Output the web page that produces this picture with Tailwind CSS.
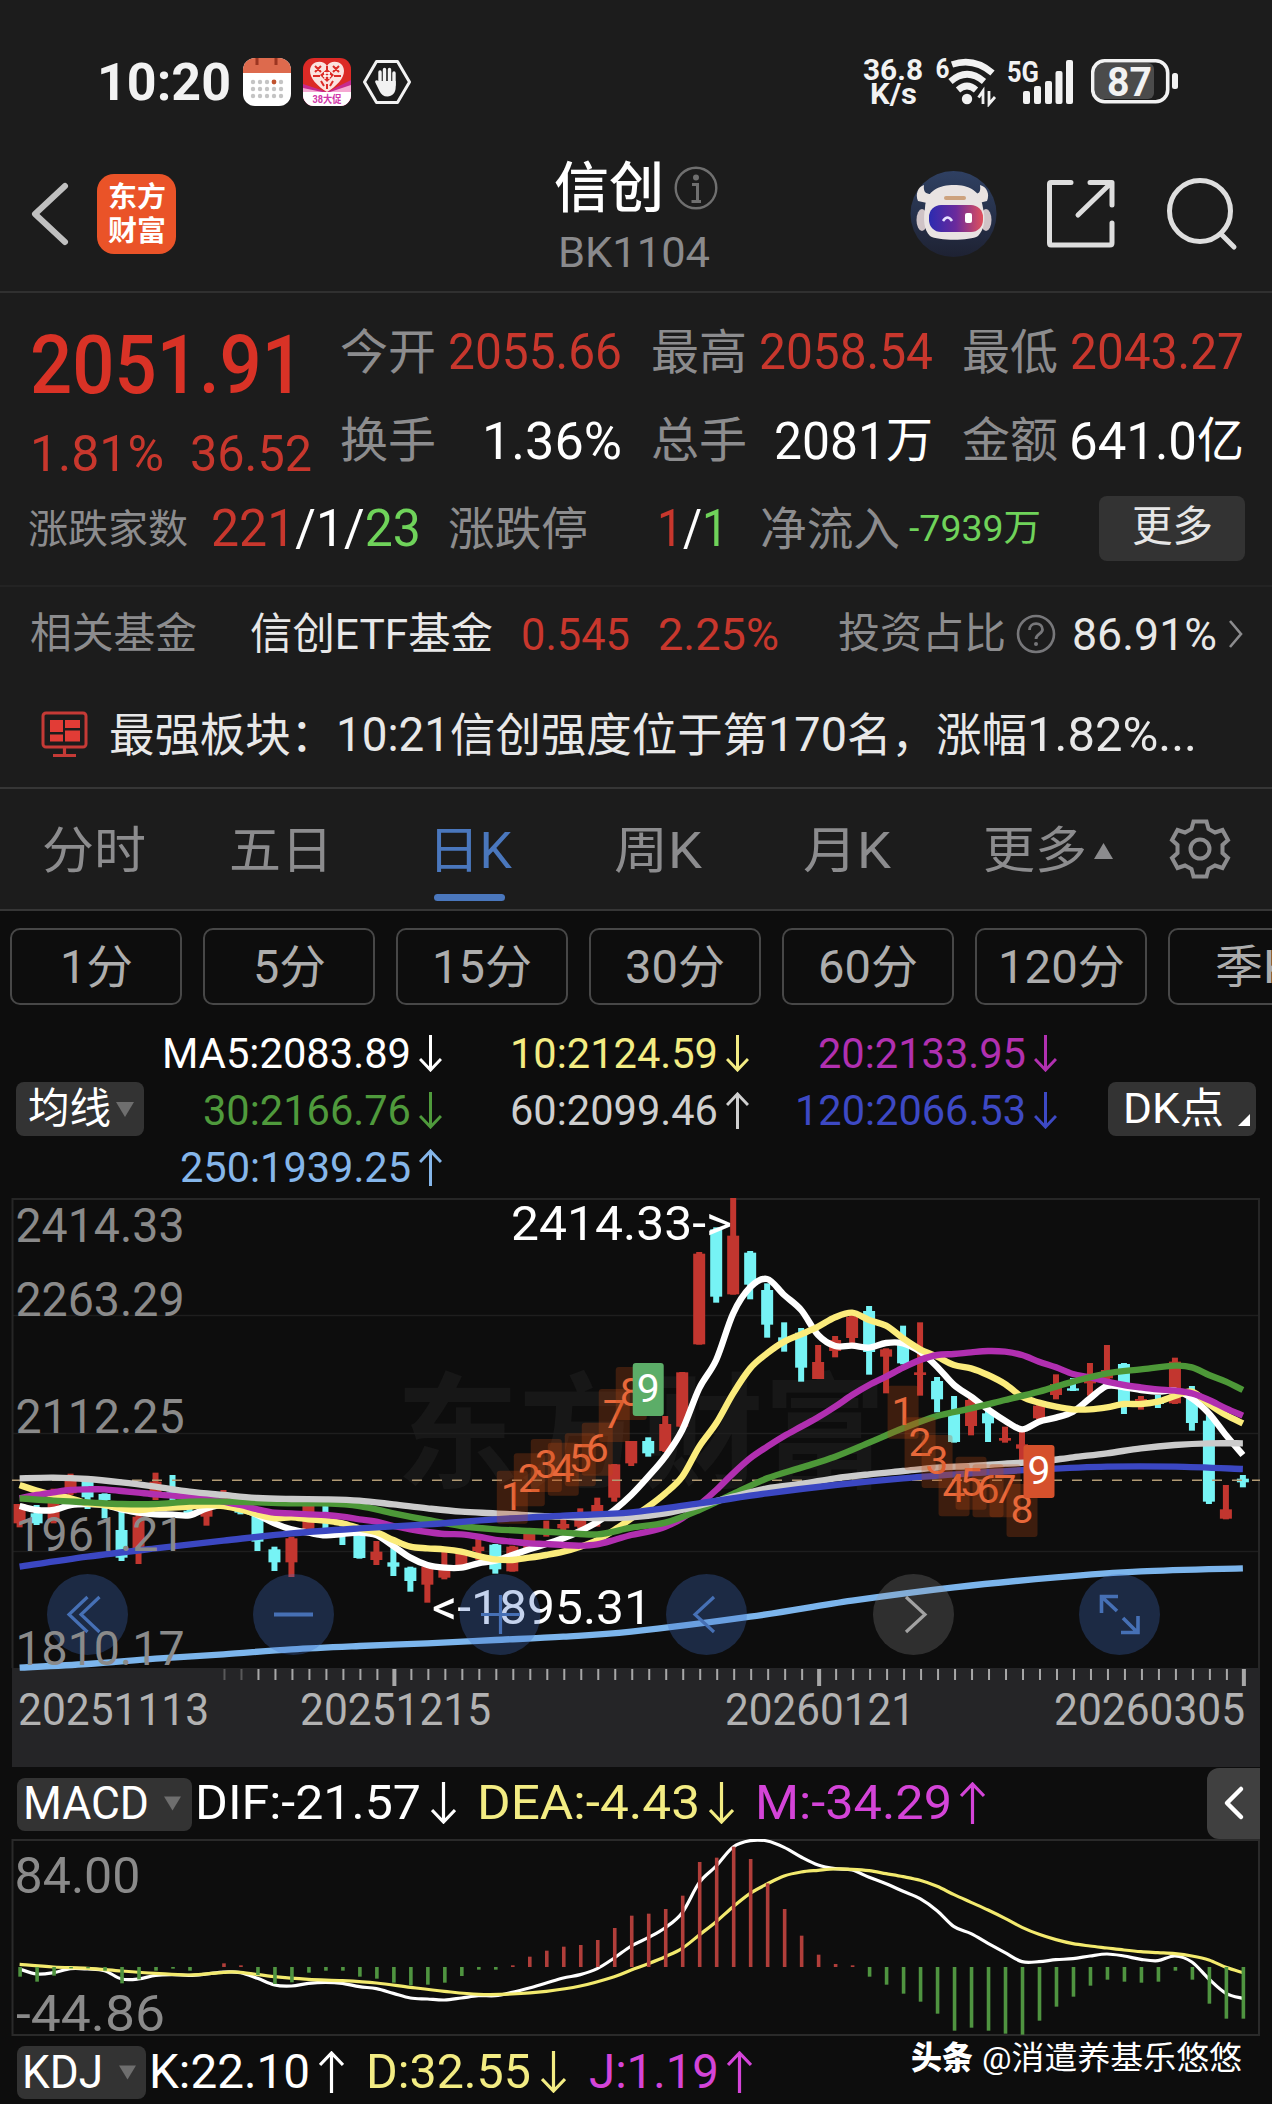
<!DOCTYPE html>
<html lang="zh-CN">
<head>
<meta charset="utf-8">
<title>信创 BK1104</title>
<script src="https://cdn.jsdelivr.net/npm/@tailwindcss/browser@4"></script>
</head>
<body class="w-[1272px] h-[2104px] overflow-hidden bg-[#0d0d0d] font-['Roboto','Noto_Sans_CJK_SC',sans-serif] text-white leading-none whitespace-nowrap">

<div class="bg-[#1c1c1c]">
  <!-- status bar -->
  <div class="h-[134px] pt-[30px] flex">
    <div class="h-[104px] flex items-center pl-[97px] grow">
      <span data-w="134" class="text-[51px] font-bold text-[#f2f2f2]">10:20</span>
      <svg class="ml-3" width="48" height="48" viewBox="0 0 48 48"><rect width="48" height="48" rx="12" fill="#fff"/><path d="M0 15V12A12 12 0 0 1 12 0H36A12 12 0 0 1 48 12V15Z" fill="#dd6a4d"/><path d="M14 0v7M33 0v7" stroke="#9c3521" stroke-width="3"/><g fill="#c4c4c4"><circle cx="10" cy="24" r="2.2"/><circle cx="17" cy="24" r="2.2"/><circle cx="24" cy="24" r="2.2"/><circle cx="31" cy="24" r="2.4" fill="#c0532f"/><circle cx="38" cy="24" r="2.2"/><circle cx="10" cy="31" r="2.2"/><circle cx="17" cy="31" r="2.2"/><circle cx="24" cy="31" r="2.2"/><circle cx="31" cy="31" r="2.2"/><circle cx="38" cy="31" r="2.2"/><circle cx="10" cy="38" r="2.2"/><circle cx="17" cy="38" r="2.2"/><circle cx="24" cy="38" r="2.2"/><circle cx="31" cy="38" r="2.2"/><circle cx="38" cy="38" r="2.2"/></g></svg>
      <svg class="ml-3" width="48" height="48" viewBox="0 0 48 48"><defs><clipPath id="mall"><rect width="48" height="48" rx="11"/></clipPath></defs><g clip-path="url(#mall)"><rect width="48" height="48" fill="#dc2a26"/><path d="M0 26L24 34L48 22V48H0Z" fill="#c62a8f"/><path d="M0 30L24 35L48 27V48H0Z" fill="#f5a9d2"/><path d="M24 34C14 28 7 20 7 13C7 3 20 1 24 8C28 1 41 3 41 13C41 20 34 28 24 34Z" fill="#fbe3e0"/><path d="M12 8l6 6m0-6l-6 6M30 8l6 6m0-6l-6 6M10 18h7M31 18h7M18 23l3 5M30 23l-3 5M24 8v6M24 26v5" stroke="#dc2a26" stroke-width="2"/><path d="M24 11L31 17L24 24L17 17Z" fill="#dc2a26"/><path d="M21 15h6M20 18h8M22 14v7M26 14v7" stroke="#fff" stroke-width="1.4"/><rect y="34" width="48" height="14" fill="#fff"/></g><text x="24" y="44.500" font-size="10.500" font-weight="700" fill="#d035a8" text-anchor="middle" textLength="29" lengthAdjust="spacingAndGlyphs">38大促</text></svg>
      <svg class="ml-3" width="48" height="46" viewBox="0 0 48 46"><path d="M13.500 2.500H34.500L46.500 23L34.500 43.500H13.500L1.500 23Z" fill="none" stroke="#f2f2f2" stroke-width="3" stroke-linejoin="round"/><path d="M17 26V13M21.500 24V10.500M26.500 24V10.500M31 26V14" stroke="#f2f2f2" stroke-width="3.400" stroke-linecap="round"/><path d="M15.300 22H32.700V28C32.700 34 29 37.500 24.500 37.500C20.500 37.500 18 35.500 16.500 32L12.300 23.500C11.500 21.500 14 20.500 15.300 22Z" fill="#f2f2f2"/></svg>
    </div>
    <div class="h-[104px] flex items-center text-[#f2f2f2] font-bold pr-[93px]">
      <div class="flex flex-col items-center text-[30px]">
        <span data-w="60" class="h-6 flex items-center">36.8</span>
        <span data-w="47" class="h-6 flex items-center">K/s</span>
      </div>
      <svg class="ml-3" width="64" height="50" viewBox="935 56 64 50"><text x="935.500" y="76.500" font-size="27" font-weight="700" fill="#f2f2f2" textLength="14" lengthAdjust="spacingAndGlyphs">6</text><circle cx="967" cy="98" r="5.200" fill="#f2f2f2"/><g fill="none" stroke="#f2f2f2" stroke-width="6.500"><path d="M958 89Q967 81 976 89"/><path d="M950.500 80.500Q967 66 984 80.500"/><path d="M952 63.500Q974 56 992.500 72"/></g><path d="M983 103V90L978.500 96.500M989 90V103L995 96" fill="none" stroke="#f2f2f2" stroke-width="2.800"/></svg>
      <svg class="ml-2" width="68" height="50" viewBox="1007 56 68 50"><text x="1007" y="80.500" font-size="29" font-weight="700" fill="#f2f2f2" textLength="32" lengthAdjust="spacingAndGlyphs">5G</text><g fill="#f2f2f2"><rect x="1023" y="90" width="7" height="13" rx="2"/><rect x="1034" y="85" width="7" height="18" rx="2"/><rect x="1045" y="80" width="7" height="23" rx="2"/><rect x="1055.500" y="70" width="7" height="33" rx="2"/><rect x="1066" y="59" width="7" height="44" rx="2"/></g></svg>
      <svg class="ml-4 mb-[2px]" width="88" height="46" viewBox="1091 57 88 46"><rect x="1095" y="62" width="59" height="36" rx="6" fill="#4b4b4b"/><rect x="1092.700" y="59.700" width="75" height="41" rx="12" fill="none" stroke="#f2f2f2" stroke-width="3.600"/><rect x="1172" y="72" width="6" height="16" rx="2.500" fill="#f2f2f2"/><text x="1107" y="95" font-size="41" font-weight="700" fill="#f2f2f2" textLength="45" lengthAdjust="spacingAndGlyphs">87</text></svg>
    </div>
  </div>

  <!-- title bar -->
  <div class="h-[159px] border-b-2 border-[#303030] flex">
    <div class="w-[554px] h-[160px] flex items-center pl-[29px]">
      <svg width="42" height="66" viewBox="0 0 42 66" fill="none" stroke="#c0c0c0" stroke-width="6" stroke-linecap="round" stroke-linejoin="round"><path d="M36 5L6 33L36 61"/></svg>
      <div class="ml-[26px] w-[79px] h-[80px] rounded-[17px] bg-[#ea5328] flex flex-col items-center justify-center text-[28px] font-bold pb-px">
        <span data-w="58" class="h-[34px] flex items-center">东方</span><span data-w="58" class="h-[34px] flex items-center">财富</span>
      </div>
    </div>
    <div class="w-[339px] pt-[23px]">
      <div class="h-[62px] flex items-center">
        <span data-w="110" class="text-[55px] font-medium">信创</span>
        <svg class="ml-[10px]" width="44" height="44" viewBox="0 0 44 44"><circle cx="22" cy="22" r="20.300" fill="none" stroke="#6f6f6f" stroke-width="2.400"/><circle cx="22" cy="11.500" r="3" fill="#6f6f6f"/><path d="M18 18.500H23.500V35M17.500 35.500H27" fill="none" stroke="#6f6f6f" stroke-width="3"/></svg>
      </div>
      <div class="h-[67px] flex items-center pl-1"><span data-w="152" class="text-[43px] text-[#8a8a8c]">BK1104</span></div>
    </div>
    <div class="h-[160px] flex items-center pl-[17px]">
      <svg width="87" height="88" viewBox="0 0 87 88"><defs><linearGradient id="visor" x1="0" x2="1"><stop offset="0" stop-color="#2b2bb0"/><stop offset=".5" stop-color="#6b2a9c"/><stop offset="1" stop-color="#e0505c"/></linearGradient><linearGradient id="halo" x1="0" x2="0" y1="0" y2="1"><stop offset="0" stop-color="#2f4062"/><stop offset="1" stop-color="#1e2233"/></linearGradient></defs><circle cx="43.500" cy="44" r="43" fill="url(#halo)"/><path d="M8 31C5 24 8 17 14 15C13 22 16 24 21 24L17 33ZM77 31C80 24 77 17 70 15C71 22 69 24 64 24L69 33Z" fill="#e9e2e0"/><ellipse cx="12" cy="50" rx="5.500" ry="11" fill="#cfc3c6"/><ellipse cx="76" cy="50" rx="5.500" ry="11" fill="#cfc3c6"/><path d="M15 38C16 20 30 15 44 15C58 15 71 20 73 38C76 50 74 60 68 66C60 71 28 71 20 66C14 60 13 50 15 38Z" fill="#e9e3e2"/><rect x="34" y="26" width="22" height="4" rx="2" fill="#cda27e"/><rect x="19" y="35" width="54" height="27" rx="12" fill="url(#visor)"/><path d="M33 51Q37.500 44 42 51" fill="none" stroke="#e7e0ff" stroke-width="2.600"/><rect x="55" y="43" width="7" height="10" rx="2" fill="#fff"/></svg>
      <svg class="ml-[48px]" width="72" height="72" viewBox="0 0 72 72" fill="none" stroke="#dedede" stroke-width="5" stroke-linecap="round" stroke-linejoin="round"><path d="M26 4.500H6Q4.500 4.500 4.500 6V65Q4.500 67 6 67H65Q67 67 67 65V45M45 4.500H67V27M33 37L65 6"/></svg>
      <svg class="ml-[48px]" width="76" height="76" viewBox="0 0 76 76" fill="none" stroke="#dedede" stroke-width="5" stroke-linecap="round"><circle cx="35" cy="35" r="30.500"/><path d="M56 58L69 71"/></svg>
    </div>
  </div>

  <!-- quote block -->
  <div class="pt-[15px] h-[294px] text-[50px] border-b-2 border-[#232323]">
    <div class="flex">
      <div class="w-[340px] pl-[30px] text-[#c8372d]">
        <div class="h-[114px] flex items-center"><span data-w="274" class="text-[81px] font-medium text-[#d93226]">2051.91</span></div>
        <div class="h-[63px] flex items-center"><span data-w="134">1.81%</span><span data-w="122" class="ml-[26px]">36.52</span></div>
      </div>
      <div class="grid grid-cols-[282px_282px_282px] gap-x-[29px] text-[#c8372d]">
        <div class="h-[88px] flex items-center justify-between"><span data-w="96" class="pt-px text-[48px] text-[#8c8c8e]">今开</span><span data-w="174">2055.66</span></div>
        <div class="h-[88px] flex items-center justify-between"><span data-w="96" class="pt-px text-[48px] text-[#8c8c8e]">最高</span><span data-w="174">2058.54</span></div>
        <div class="h-[88px] flex items-center justify-between"><span data-w="96" class="pt-px text-[48px] text-[#8c8c8e]">最低</span><span data-w="174">2043.27</span></div>
        <div class="h-[89px] flex items-center justify-between"><span data-w="96" class="pt-px text-[48px] text-[#8c8c8e]">换手</span><span data-w="140" class="text-[52px] text-white">1.36%</span></div>
        <div class="h-[89px] flex items-center justify-between"><span data-w="96" class="pt-px text-[48px] text-[#8c8c8e]">总手</span><span class="flex items-center text-white"><span data-w="112" class="text-[52px]">2081</span><span data-w="47" class="text-[48px]">万</span></span></div>
        <div class="h-[89px] flex items-center justify-between"><span data-w="96" class="pt-px text-[48px] text-[#8c8c8e]">金额</span><span class="flex items-center text-white"><span data-w="128" class="text-[52px]">641.0</span><span data-w="47" class="text-[48px]">亿</span></span></div>
      </div>
    </div>
    <div class="h-[86px] flex items-center text-[46px] text-[#8c8c8e]">
      <span data-w="160" class="ml-[28px] pt-px text-[40px]">涨跌家数</span>
      <span data-w="210" class="ml-[23px] text-[52px] text-white"><span class="fill-[#c8372d]">221</span>/1/<span class="fill-[#6fd35a]">23</span></span>
      <span data-w="140" class="ml-[27px] pt-px">涨跌停</span>
      <span data-w="71" class="ml-[69px] text-[52px] text-white"><span class="fill-[#c8372d]">1</span>/<span class="fill-[#6fd35a]">1</span></span>
      <span data-w="140" class="ml-[32px] pt-px">净流入</span>
      <span data-w="132" class="ml-[9px] text-[37px] text-[#6fd35a]">-7939万</span>
      <div class="ml-[58px] w-[146px] h-[65px] rounded-lg bg-[#333333] flex items-center justify-center text-[#e6e6e6] pb-[2px]"><span data-w="81" class="text-[42px]">更多</span></div>
    </div>
  </div>

  <!-- related fund -->
  <div class="h-[94px] flex items-center text-[45px]">
    <span data-w="167" class="ml-[30px] text-[42px] text-[#8c8c8e]">相关基金</span>
    <span data-w="243" class="ml-[53px] text-[43px] text-[#e8e8e8]">信创ETF基金</span>
    <span data-w="109" class="ml-[28px] text-[#c8372d]">0.545</span>
    <span data-w="121" class="ml-[28px] text-[#c8372d]">2.25%</span>
    <span data-w="168" class="ml-[59px] text-[42px] text-[#8c8c8e]">投资占比</span>
    <svg class="ml-[10px]" width="40" height="40" viewBox="0 0 40 40"><circle cx="20" cy="20" r="18" fill="none" stroke="#77777a" stroke-width="2.600"/><path d="M13.500 16C13.500 7.500 26.500 7.500 26.500 15.500C26.500 20 20 20 20 25" fill="none" stroke="#77777a" stroke-width="2.800"/><circle cx="20" cy="30" r="2" fill="#77777a"/></svg>
    <span data-w="145" class="ml-[16px] text-[#e8e8e8]">86.91%</span>
    <svg class="ml-[10px]" width="18" height="30" viewBox="0 0 18 30" fill="none" stroke="#8c8c8e" stroke-width="2.600"><path d="M3 2L14 15L3 28"/></svg>
  </div>

  <!-- news ticker -->
  <div class="h-[108px] border-b-2 border-[#363636] flex items-center pt-px">
    <svg class="ml-[41px] mr-[21px]" width="47" height="48" viewBox="0 0 47 48"><rect x="2" y="2" width="43" height="34" rx="3" fill="none" stroke="#c53a36" stroke-width="3"/><path d="M23.500 36V44M12 44.500H35" stroke="#c53a36" stroke-width="3.200"/><g fill="#e23c36"><rect x="9" y="9" width="13" height="12"/><rect x="24" y="9" width="15" height="8"/><rect x="9" y="23.500" width="13" height="7"/><rect x="24" y="19.500" width="15" height="11"/></g></svg>
    <div class="flex items-center text-[46px] text-[#e8e8e8]"><span data-w="227">最强板块：</span><span data-w="114" class="text-[48px]">10:21</span><span data-w="318">信创强度位于第</span><span data-w="79" class="text-[48px]">170</span><span data-w="89">名，</span><span data-w="91">涨幅</span><span data-w="170" class="text-[48px]">1.82%...</span></div>
  </div>

  <!-- period tabs -->
  <div class="h-[122px] border-b-2 border-[#363636] flex items-center text-[50px] text-[#8c8c8e] pt-[3px]">
    <span data-w="104" class="ml-[42px]">分时</span>
    <span data-w="104" class="ml-[83px]">五日</span>
    <div class="relative ml-[95px] h-[117px] flex items-center text-[#4a77bd]"><span data-w="84">日K</span><div class="absolute left-[6px] bottom-[8px] w-[71px] h-[7px] rounded-full bg-[#4a77bd]"></div></div>
    <span data-w="88" class="ml-[102px]">周K</span>
    <span data-w="88" class="ml-[101px]">月K</span>
    <span data-w="104" class="ml-[92px]">更多</span>
    <svg class="ml-[7px]" width="19" height="16" viewBox="0 0 19 16"><path d="M9.500 0L19 16H0Z" fill="#8c8c8e"/></svg>
    <svg class="ml-[55px] mb-[3px]" width="64" height="64" viewBox="-32 -32 64 64" fill="none" stroke="#8c8c8e" stroke-width="4"><path d="M-6.500 -27.500H6.500L8.500 -20L15 -16.500L22.500 -19L28 -9L22.500 -4V4L28 9L22.500 19L15 16.500L8.500 20L6.500 27.500H-6.500L-8.500 20L-15 16.500L-22.500 19L-28 9L-22.500 4V-4L-28 -9L-22.500 -19L-15 -16.500L-8.500 -20Z"/><circle r="9.500"/></svg>
  </div>
</div>

<!-- minute periods -->
<div class="pt-[17px] pl-[10px] flex gap-[21px] text-[46px] text-[#adadad] overflow-hidden">
  <div class="w-[172px] h-[77px] shrink-0 rounded-[10px] border-2 border-[#474747] flex items-center justify-center"><span data-w="73">1分</span></div>
  <div class="w-[172px] h-[77px] shrink-0 rounded-[10px] border-2 border-[#474747] flex items-center justify-center"><span data-w="73">5分</span></div>
  <div class="w-[172px] h-[77px] shrink-0 rounded-[10px] border-2 border-[#474747] flex items-center justify-center"><span data-w="100">15分</span></div>
  <div class="w-[172px] h-[77px] shrink-0 rounded-[10px] border-2 border-[#474747] flex items-center justify-center"><span data-w="100">30分</span></div>
  <div class="w-[172px] h-[77px] shrink-0 rounded-[10px] border-2 border-[#474747] flex items-center justify-center"><span data-w="100">60分</span></div>
  <div class="w-[172px] h-[77px] shrink-0 rounded-[10px] border-2 border-[#474747] flex items-center justify-center"><span data-w="127">120分</span></div>
  <div class="w-[172px] h-[77px] shrink-0 rounded-[10px] border-2 border-[#474747] flex items-center justify-center"><span data-w="78">季K</span></div>
</div>

<!-- moving average legend -->
<div class="h-[193px] pt-[20px] flex text-[43px]">
  <div class="ml-[16px] mt-[57px] w-[128px] h-[54px] rounded-lg bg-[#333333] flex items-center pl-3">
    <span data-w="83" class="text-[42px]">均线</span>
    <svg class="ml-[5px]" width="18" height="15" viewBox="0 0 18 15"><path d="M0 0H18L9 15Z" fill="#6e6e6e"/></svg>
  </div>
  <div class="w-[298px]">
    <div class="h-[57px] flex items-center justify-end gap-[8px]"><span data-w="249">MA5:2083.89</span><svg width="23" height="37" viewBox="0 0 23 37" fill="none" stroke="currentColor" stroke-width="3"><path d="M11.500 0V34M1 24L11.500 35L22 24"/></svg></div>
    <div class="h-[57px] flex items-center justify-end gap-[8px] text-[#4f9a3c]"><span data-w="208">30:2166.76</span><svg width="23" height="37" viewBox="0 0 23 37" fill="none" stroke="currentColor" stroke-width="3"><path d="M11.500 0V34M1 24L11.500 35L22 24"/></svg></div>
    <div class="h-[57px] flex items-center justify-end gap-[8px] text-[#85b6ea]"><span data-w="231">250:1939.25</span><svg width="23" height="37" viewBox="0 0 23 37" fill="none" stroke="currentColor" stroke-width="3"><path d="M11.500 37V3M1 13L11.500 2L22 13"/></svg></div>
  </div>
  <div class="w-[307px]">
    <div class="h-[57px] flex items-center justify-end gap-[8px] text-[#f3ec83]"><span data-w="208">10:2124.59</span><svg width="23" height="37" viewBox="0 0 23 37" fill="none" stroke="currentColor" stroke-width="3"><path d="M11.500 0V34M1 24L11.500 35L22 24"/></svg></div>
    <div class="h-[57px] flex items-center justify-end gap-[8px] text-[#cfcfcf]"><span data-w="208">60:2099.46</span><svg width="23" height="37" viewBox="0 0 23 37" fill="none" stroke="currentColor" stroke-width="3"><path d="M11.500 37V3M1 13L11.500 2L22 13"/></svg></div>
  </div>
  <div class="w-[308px]">
    <div class="h-[57px] flex items-center justify-end gap-[8px] text-[#b130b0]"><span data-w="208">20:2133.95</span><svg width="23" height="37" viewBox="0 0 23 37" fill="none" stroke="currentColor" stroke-width="3"><path d="M11.500 0V34M1 24L11.500 35L22 24"/></svg></div>
    <div class="h-[57px] flex items-center justify-end gap-[8px] text-[#3d49c4]"><span data-w="231">120:2066.53</span><svg width="23" height="37" viewBox="0 0 23 37" fill="none" stroke="currentColor" stroke-width="3"><path d="M11.500 0V34M1 24L11.500 35L22 24"/></svg></div>
  </div>
  <div class="ml-[51px] mt-[57px] w-[148px] h-[54px] rounded-lg bg-[#333333] flex items-center pl-[15px]">
    <span data-w="101" class="text-[42px]">DK点</span>
    <svg class="ml-[14px] mt-[21px]" width="12" height="12" viewBox="0 0 12 12"><path d="M12 0V12H0Z" fill="#fff"/></svg>
  </div>
</div>

<!-- candlestick chart -->
<svg id="kline" class="block" width="1272" height="569" viewBox="0 1198 1272 569">
  <text x="396" y="1478" font-size="125" font-weight="700" fill="#171717" textLength="490" lengthAdjust="spacingAndGlyphs">东方财富</text>
  <rect x="12" y="1668" width="1248" height="99" fill="#252527"/>
  <g stroke="#1e1e1e" stroke-width="1.500"><path d="M12 1315.500H1260M12 1433.500H1260M12 1551.500H1260"/></g>
  <path d="M12 1199H1259V1668M12.500 1198V1668" fill="none" stroke="#262626" stroke-width="2"/>
  <g id="candles"></g>
  <path d="M12 1480.300H1260" stroke="#b39b74" stroke-width="1.600" stroke-dasharray="10 10"/>
  <g id="averages" fill="none" stroke-width="6.400" stroke-linejoin="round"></g>
  <g id="counts"></g>
  <g id="ticks" fill="#a8a8a8"></g>
  <g fill="#fff" font-size="48">
    <text x="511" y="1240" textLength="221" lengthAdjust="spacingAndGlyphs">2414.33-&gt;</text>
    <text x="432" y="1623.500" textLength="220" lengthAdjust="spacingAndGlyphs">&lt;-1895.31</text>
  </g>
  <g fill="rgb(63,110,196)" fill-opacity=".3">
    <circle cx="87.500" cy="1614.500" r="40.500"/><circle cx="293.500" cy="1614.500" r="40.500"/><circle cx="500" cy="1614.500" r="40.500"/><circle cx="706.500" cy="1614.500" r="40.500"/><circle cx="1119.500" cy="1614.500" r="40.500"/>
    <circle cx="913.500" cy="1614.500" r="40.500" fill="#969696" fill-opacity=".25"/>
  </g>
  <g fill="none" stroke="#4670b5" stroke-width="3.200">
    <path d="M87.500 1597L69 1614.500L87.500 1632M99.500 1597L81 1614.500L99.500 1632"/>
    <path d="M274 1614.500H313" stroke-width="4"/>
    <path d="M481 1614.500H520M500.500 1595V1634"/>
    <path d="M714 1597L695 1614.500L714 1632"/>
    <path d="M906 1597L925 1614.500L906 1632" stroke="#a2a2a2"/>
    <path d="M1118 1596.500H1101.500V1613M1102 1597L1117 1611M1121 1632.500H1138V1616M1137 1632L1123 1618" stroke-width="3.600"/>
  </g>
  <g fill="#8a8a8a" font-size="48">
    <text x="15.500" y="1242" textLength="169" lengthAdjust="spacingAndGlyphs">2414.33</text>
    <text x="15.500" y="1316" textLength="169" lengthAdjust="spacingAndGlyphs">2263.29</text>
    <text x="15.500" y="1433" textLength="169" lengthAdjust="spacingAndGlyphs">2112.25</text>
    <text x="15.500" y="1551" textLength="169" lengthAdjust="spacingAndGlyphs">1961.21</text>
    <text x="15.500" y="1665" textLength="169" lengthAdjust="spacingAndGlyphs">1810.17</text>
  </g>
  <g fill="#b2b2b2" font-size="44">
    <text x="18" y="1725" textLength="191" lengthAdjust="spacingAndGlyphs">20251113</text>
    <text x="300" y="1725" textLength="191" lengthAdjust="spacingAndGlyphs">20251215</text>
    <text x="725" y="1725" textLength="190" lengthAdjust="spacingAndGlyphs">20260121</text>
    <text x="1054" y="1725" textLength="191" lengthAdjust="spacingAndGlyphs">20260305</text>
  </g>
</svg>

<!-- MACD -->
<div class="h-[72px] flex items-center text-[48px]">
  <div class="ml-[17px] mt-[2px] w-[175px] h-[53px] rounded-lg bg-[#333333] flex items-center pl-[6px] pb-[2px]">
    <span data-w="126" class="text-[46px]">MACD</span>
    <svg class="ml-[15px] mt-px" width="17" height="15" viewBox="0 0 18 15"><path d="M0 0H18L9 15Z" fill="#6e6e6e"/></svg>
  </div>
  <span data-w="226" class="ml-[3px]">DIF:-21.57</span>
  <svg class="ml-[10px]" width="25" height="42" viewBox="0 0 25 42" fill="none" stroke="#fff" stroke-width="3.200"><path d="M12.500 0V39M1 28L12.500 40L24 28"/></svg>
  <span data-w="223" class="ml-[21px] text-[#f3ec83]">DEA:-4.43</span>
  <svg class="ml-[9px]" width="25" height="42" viewBox="0 0 25 42" fill="none" stroke="#f3ec83" stroke-width="3.200"><path d="M12.500 0V39M1 28L12.500 40L24 28"/></svg>
  <span data-w="197" class="ml-[21px] text-[#d444d8]">M:-34.29</span>
  <svg class="ml-[8px]" width="25" height="42" viewBox="0 0 25 42" fill="none" stroke="#d444d8" stroke-width="3.200"><path d="M12.500 42V3M1 14L12.500 2L24 14"/></svg>
  <div class="ml-auto mr-[12px] w-[53px] h-[71px] rounded-l-xl bg-[#404040] flex items-center justify-center"><svg width="22" height="36" viewBox="0 0 22 36" fill="none" stroke="#fff" stroke-width="4.500" stroke-linecap="round" stroke-linejoin="round"><path d="M18 4L4 18L18 32"/></svg></div>
</div>
<svg id="macd" class="block" width="1272" height="197" viewBox="0 1839 1272 197">
  <rect x="12.500" y="1840" width="1246.500" height="195" fill="none" stroke="#2a2a2a" stroke-width="2"/>
  <g id="macdLines" fill="none" stroke-width="3.200" stroke-linejoin="round"></g>
  <g id="macdBars"></g>
  <g fill="#8a8a8a" font-size="50">
    <text x="14.500" y="1892.500" textLength="126" lengthAdjust="spacingAndGlyphs">84.00</text>
    <text x="16" y="2031" textLength="149" lengthAdjust="spacingAndGlyphs">-44.86</text>
  </g>
</svg>

<!-- KDJ -->
<div class="h-[68px] flex items-center text-[48px] pt-[4px]">
  <div class="ml-[17px] w-[129px] h-[53px] rounded-lg bg-[#333333] flex items-center pl-[5px]">
    <span data-w="81" class="text-[46px]">KDJ</span>
    <svg class="ml-[16px]" width="17" height="15" viewBox="0 0 18 15"><path d="M0 0H18L9 15Z" fill="#6e6e6e"/></svg>
  </div>
  <span data-w="161" class="ml-[3px]">K:22.10</span>
  <svg class="ml-[9px]" width="25" height="42" viewBox="0 0 25 42" fill="none" stroke="#fff" stroke-width="3.200"><path d="M12.500 42V3M1 14L12.500 2L24 14"/></svg>
  <span data-w="165" class="ml-[22px] text-[#f3ec83]">D:32.55</span>
  <svg class="ml-[10px]" width="25" height="42" viewBox="0 0 25 42" fill="none" stroke="#f3ec83" stroke-width="3.200"><path d="M12.500 0V39M1 28L12.500 40L24 28"/></svg>
  <span data-w="130" class="ml-[23px] text-[#d444d8]">J:1.19</span>
  <svg class="ml-[8px]" width="25" height="42" viewBox="0 0 25 42" fill="none" stroke="#d444d8" stroke-width="3.200"><path d="M12.500 42V3M1 14L12.500 2L24 14"/></svg>
  <div class="ml-auto mr-[30px] mb-[29px] flex items-center gap-[9px]"><span data-w="62" class="text-[32px] font-black">头条</span><span data-w="260" class="text-[32px]">@消遣养基乐悠悠</span></div>
</div>

<script>
document.querySelectorAll('[data-w]').forEach(el => {
  const w = el.dataset.w;
  const body = el.innerHTML.replace(/(<\/?)span/g, '$1tspan');
  el.classList.add('shrink-0');
  el.style.width = w + 'px';
  el.innerHTML = `<svg class="block h-[1em] w-full overflow-visible"><text x="0" y="0.842em" fill="currentColor" textLength="${w}" lengthAdjust="spacingAndGlyphs">${body}</text></svg>`;
});

const X = i => 19.6 + 16.99 * i;
const Y = v => 1180 + v / 3;
const put = (id, html) => document.getElementById(id).innerHTML = html;

// Candles: direction, high, body top, body bottom, low
const candles = [
'r 972 972 1030 1042','c 975 1000 1030 1035','r 926 937 1025 1030','r 881 890 940 945','c 888 900 952 987','c 940 942 960 1015','c 990 1050 1133 1143','r 975 1010 1115 1152','r 878 905 950 960','c 885 935 945 960','c 960 992 1010 1012','r 980 985 1010 1037','r 930 955 965 985','c 965 990 998 1003','c 995 1000 1085 1113','c 1100 1108 1147 1173','r 1070 1075 1147 1191','r 975 978 1050 1052','c 975 1000 1010 1070','c 1040 1045 1060 1095','c 1050 1055 1134 1136','r 1083 1115 1140 1155','c 1100 1147 1160 1188','c 1160 1163 1203 1235','r 1155 1160 1214 1268','r 1115 1160 1193 1198','r 1115 1120 1160 1163','r 1062 1100 1113 1140','c 1092 1094 1168 1181','r 1097 1100 1174 1175','r 1055 1057 1110 1112','r 1022 1050 1060 1070','r 1017 1032 1045 1052','r 985 1015 1040 1045','r 953 975 1000 1040','r 852 853 953 965','r 783 783 850 858',
'c 772 783 820 830','r 708 732 813 816','r 576 577 740 742','r 216 221 493 494','c 142 148 350 368','r 54 167 343 344','c 213 218 314 358','c 310 330 434 473','c 427 472 485 515','c 444 458 563 605','r 495 546 597 597','r 468 480 513 532','r 405 410 474 490','c 378 393 516 584','r 505 508 530 640','c 437 495 550 553','r 427 577 585 647','c 591 603 658 697','c 648 695 786 788','r 655 660 738 766','c 690 700 730 786','r 740 774 782 788','r 755 793 806 850','r 672 677 715 720','r 583 612 645 658','c 594 625 632 633','r 549 590 610 647','r 495 570 595 610','c 549 552 670 702','r 648 657 668 689','c 645 660 672 684','r 533 545 670 672','c 618 655 729 752','c 700 722 965 972','r 915 988 1016 1018','c 885 896 907 922'];
put('candles', candles.map((s, i) => {
  const [d, h, t, b, l] = s.split(' ');
  const f = d === 'r' ? '#c2362f' : '#76f3f5';
  const x = X(i);
  return `<rect x="${x - 3}" y="${Y(+h)}" width="6" height="${(l - h) / 3}" fill="${f}"/><rect x="${x - 6}" y="${Y(+t)}" width="12" height="${(b - t) / 3}" fill="${f}"/>`;
}).join(''));

// Smooth path through [index, level] points
const curve = (pts, y) => {
  const p = pts.map(([i, v]) => [X(i), y(v)]);
  let d = `M${p[0]}`;
  for (let k = 0; k < p.length - 1; k++) {
    const a = p[k - 1] || p[k], b = p[k], c = p[k + 1], e = p[k + 2] || c;
    d += `C${b[0] + (c[0] - a[0]) / 6} ${b[1] + (c[1] - a[1]) / 6} ${c[0] - (e[0] - b[0]) / 6} ${c[1] - (e[1] - b[1]) / 6} ${c}`;
  }
  return d;
};
const every = (start, step, vals) => vals.map((v, k) => [start + k * step, v]);
const averages = [
 ['#fff', every(0, 1, [978,990,990,975,972,975,988,998,1003,1004,1006,985,975,985,1005,1030,1048,1058,1066,1062,1058,1065,1098,1133,1155,1163,1163,1150,1142,1125,1108,1092,1075,1053,1026,990,945,890,830,750,625,540,400,322,297,345,390,465,498,497,503,489,490,515,560,615,650,688,722,748,725,713,695,655,618,622,630,635,632,655,700,765,825])],
 ['#fbec7c', every(0, 1, [915,932,945,955,970,975,985,990,985,983,980,975,978,988,1003,1015,1012,1018,1022,1030,1045,1057,1080,1100,1105,1108,1115,1128,1138,1140,1133,1125,1115,1100,1080,1050,1015,980,940,890,800,730,640,565,520,485,463,440,412,398,420,437,475,508,530,555,565,585,612,650,668,680,688,688,682,672,672,665,648,635,672,705,730])],
 ['#b12fb0', every(0, 1, [955,945,937,930,928,928,933,938,943,947,950,955,965,975,988,998,1000,1003,1005,1010,1018,1025,1038,1048,1056,1062,1063,1070,1080,1085,1090,1092,1095,1097,1093,1080,1065,1055,1040,1015,975,930,880,835,800,768,740,712,680,645,615,590,563,540,525,522,517,513,515,525,545,562,582,592,605,615,622,628,632,640,660,685,707])],
 ['#4d9838', [[0,955],...every(2, 2, [962,967,972,972,965,965,967,970,970,978,1000,1020,1038,1048,1053,1058,1063,1043,1028,990,942,895,863,830,788,745,708,685,660,635,605,580,568,557]),[69,562],[70,585],[71,605],[72,630]]],
 ['#cbcbcb', every(0, 2, [895,893,897,907,920,935,945,954,957,958,962,973,985,995,1000,1006,1010,1014,1012,1000,977,950,925,912,895,883,873,863,858,851,845,832,820,805,795,790,790])],
 ['#3b47c2', [[0,1160],[4,1130],[8,1105],[12,1082],[16,1060],[20,1045],[24,1033],[28,1018],[32,1007],[36,997],[40,970],[44,940],[48,915],[52,895],[56,880],[60,868],[64,860],[68,860],[72,867]]],
 ['#7cb5ec', [[0,1463],[4,1452],[8,1436],[12,1423],[16,1408],[20,1398],[24,1390],[28,1380],[32,1370],[36,1355],[43,1310],[49,1262],[55,1222],[61,1192],[66,1174],[72,1165]]]
];
put('averages', averages.map(([c, p]) => `<path stroke="${c}" d="${curve(p, Y)}"/>`).join(''));

// Sequence counts 1-9
const counts = [[29, [872,820,777,788,760,728,627,561,549], '#5cad68'], [52, [617,712,765,850,830,853,853,912,795], '#d5512c']];
put('counts', counts.map(([s, tops, last]) => tops.map((t, k) => {
  const x = X(s + k), y = Y(t), end = k === 8;
  return `<rect x="${x - 15.5}" y="${y}" width="31" height="53" rx="3" fill="${end ? last : '#c04a14'}" fill-opacity="${end ? 1 : .27}"/><text x="${x - 11.5}" y="${y + 39}" font-size="39" textLength="23" lengthAdjust="spacingAndGlyphs" fill="${end ? '#fff' : '#e8683a'}">${k + 1}</text>`;
}).join('')).join(''));

// Axis ticks
let t = '';
for (let i = 12; i <= 72; i++) {
  const major = i === 22 || i === 47 || i === 72;
  t += `<rect x="${X(i) + (major ? -1 : 0)}" y="1669" width="${major ? 4 : 2}" height="${major ? 17 : 11}" fill-opacity="${i < 14 ? .4 : 1}"/>`;
}
put('ticks', t);

// MACD histogram and lines
const M = v => 1750 + v / 3;
const bars = [680,695,677,655,655,662,700,688,662,656,662,651,640,646,675,702,697,668,662,662,680,686,698,706,704,698,678,659,659,646,620,602,590,585,570,534,497,491,477,437,336,323,290,327,400,477,557,614,642,646,680,704,731,755,791,842,833,842,851,854,812,770,740,707,689,695,698,695,662,689,761,806,806];
put('macdBars', bars.map((v, i) => `<rect x="${X(i) - 1.3}" y="${M(Math.min(v, 651))}" width="3.6" height="${Math.abs(v - 651) / 3}" fill="${v < 651 ? '#b03e3a' : '#4f9440'}"/>`).join(''));
const dif = every(0, 1, [657,672,668,656,657,662,687,687,676,674,676,672,666,668,685,705,708,700,697,700,710,716,730,744,747,750,744,737,737,727,714,699,684,674,656,624,588,563,533,488,398,348,291,272,273,292,321,345,356,360,382,401,424,446,482,530,551,580,608,635,635,629,626,618,612,618,628,632,618,636,687,730,745]);
const dea = [...every(0, 2, [643,651,655,663,670,675,667]),[13,667],...every(15, 2, [680,688,692,699,712,724,733,732,724,708]),...every(35, 1, [680,660,641,620,595,555,515,470,430,402,378,366,361,357,358,362,371,380,391,409,434,457,480,505,532,553,569,581,588,594,600,605,608,611,618,630,652,668])];
put('macdLines', `<path stroke="#fff" d="${curve(dif, M)}"/><path stroke="#f3ea6e" d="${curve(dea, M)}"/>`);
</script>
</body>
</html>
